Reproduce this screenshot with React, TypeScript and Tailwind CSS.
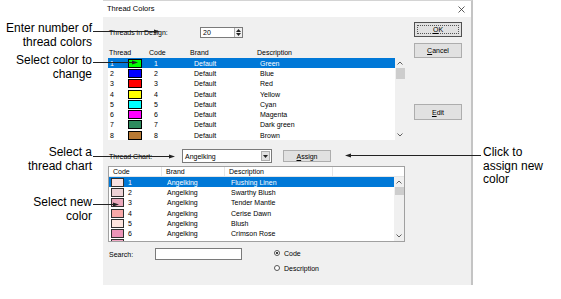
import React from "react";

const upperRows = [
  { n: "1", sw: "bg-[#00ff00]", desc: "Green" },
  { n: "2", sw: "bg-[#0000ff]", desc: "Blue" },
  { n: "3", sw: "bg-[#ff0000]", desc: "Red" },
  { n: "4", sw: "bg-[#ffff00]", desc: "Yellow" },
  { n: "5", sw: "bg-[#00ffff]", desc: "Cyan" },
  { n: "6", sw: "bg-[#ff00ff]", desc: "Magenta" },
  { n: "7", sw: "bg-[#2e8b5e]", desc: "Dark green" },
  { n: "8", sw: "bg-[#b87a34]", desc: "Brown" },
];

const lowerRows = [
  { n: "1", sw: "bg-[#f8e2e2]", desc: "Flushing Linen" },
  { n: "2", sw: "bg-[#ecd2d6]", desc: "Swarthy Blush" },
  { n: "3", sw: "bg-[#eaa8bc]", desc: "Tender Mantle" },
  { n: "4", sw: "bg-[#f8a8a8]", desc: "Cerise Dawn" },
  { n: "5", sw: "bg-[#fde4de]", desc: "Blush" },
  { n: "6", sw: "bg-[#ea94b8]", desc: "Crimson Rose" },
  { n: "7", sw: "bg-[#f0a8c4]", desc: "Sangria Belle" },
];

function Chevron({ up }: { up?: boolean }) {
  return (
    <svg width="6" height="4" viewBox="0 0 6 4">
      <polyline
        points={up ? "0.5,3.5 3,1 5.5,3.5" : "0.5,0.5 3,3 5.5,0.5"}
        fill="none"
        stroke="#606060"
        strokeWidth="1"
      />
    </svg>
  );
}

function ScrollBar({ thumb }: { thumb: string }) {
  return (
    <div className="w-[10px] h-full bg-[#f0f0f0] flex flex-col items-center">
      <div className="h-[10px] flex items-center justify-center">
        <Chevron up />
      </div>
      <div className={`w-[9px] bg-[#cdcdcd] ${thumb}`} />
      <div className="flex-1" />
      <div className="h-[10px] flex items-center justify-center">
        <Chevron />
      </div>
    </div>
  );
}

function Button({ children, h = "h-[15px]", def }: { children: React.ReactNode; h?: string; def?: boolean }) {
  return (
    <div
      className={`w-[48px] ${h} bg-[#e1e1e1] border ${def ? "border-[#505050]" : "border-[#adadad]"} flex items-center justify-center p-[2px]`}
    >
      <div className={`w-full h-full flex items-center justify-center ${def ? "border border-dotted border-[#555]" : ""}`}>
        {children}
      </div>
    </div>
  );
}

export default function App() {
  return (
    <div className="relative w-[561px] h-[299px] bg-white overflow-hidden font-['Liberation_Sans',Arial,sans-serif] text-black">
      {/* dialog */}
      <div className="ml-[103px] w-[370px] h-[285px] bg-[#f0f0f0] border-t border-[#d4d4d4] border-r-2 border-r-[#c4c4c4] flex flex-col text-[7px] leading-none">
        <div className="h-[16px] bg-white flex items-center justify-between pl-[4px] pr-[6px]">
          <span className="text-[7.5px]">Thread Colors</span>
          <svg width="7" height="7" viewBox="0 0 7 7">
            <line x1="0.5" y1="0.5" x2="6.5" y2="6.5" stroke="#333" strokeWidth="0.8" />
            <line x1="6.5" y1="0.5" x2="0.5" y2="6.5" stroke="#333" strokeWidth="0.8" />
          </svg>
        </div>

        <div className="flex flex-1 pl-[5px]">
          {/* left column */}
          <div className="w-[297px] flex flex-col">
            <div className="mt-[10px] h-[11px] flex items-center">
              <span className="w-[92px] pl-[1px]">Threads in Design:</span>
              <div className="w-[43px] h-[11px] bg-white border border-[#7a7a7a] flex items-center justify-between pl-[2px]">
                <span>20</span>
                <div className="w-[8px] h-full border-l border-[#adadad] flex flex-col items-center justify-center gap-[1px] bg-[#f0f0f0]">
                  <svg width="5" height="3" viewBox="0 0 5 3"><polygon points="0,3 2.5,0 5,3" fill="#222" /></svg>
                  <svg width="5" height="3" viewBox="0 0 5 3"><polygon points="0,0 2.5,3 5,0" fill="#222" /></svg>
                </div>
              </div>
            </div>

            <div className="mt-[8px] h-[12px] flex items-center pl-[1px]">
              <span className="w-[40px]">Thread</span>
              <span className="w-[41px]">Code</span>
              <span className="w-[67px]">Brand</span>
              <span>Description</span>
            </div>

            <div className="h-[82px] bg-white flex overflow-hidden">
              <div className="flex-1 flex flex-col">
                {upperRows.map((r, i) => (
                  <div
                    key={r.n}
                    className={`h-[10.3px] shrink-0 flex items-center ${i === 0 ? "bg-[#0078d7] text-white" : ""}`}
                  >
                    <span className="w-[20px] pl-[2px]">{r.n}</span>
                    <span className={`w-[14px] h-[9px] border border-black ${r.sw}`} />
                    <span className="w-[52px] pl-[12px]">{r.n}</span>
                    <span className="w-[66px]">Default</span>
                    <span>{r.desc}</span>
                  </div>
                ))}
              </div>
              <ScrollBar thumb="h-[11px]" />
            </div>

            <div className="mt-[9px] h-[14px] flex items-center">
              <span className="w-[74px] pl-[1px]">Thread Chart:</span>
              <div className="w-[90px] h-[14px] bg-white border border-[#7a7a7a] flex items-center justify-between pl-[2px] pr-[1px]">
                <span>Angelking</span>
                <div className="w-[9px] h-[10px] bg-[#e1e1e1] border border-[#adadad] flex items-center justify-center">
                  <svg width="5" height="3" viewBox="0 0 5 3"><polygon points="0,0 2.5,3 5,0" fill="#222" /></svg>
                </div>
              </div>
              <div className="ml-[11px]">
                <Button h="h-[12px]">
                  <span><span className="underline">A</span>ssign</span>
                </Button>
              </div>
            </div>

            <div className="mt-[3px] h-[76px] border border-[#a0a0a0] bg-white flex flex-col overflow-hidden">
              <div className="h-[10px] shrink-0 flex items-center border-b border-[#e5e5e5]">
                <span className="w-[53px] h-full flex items-center pl-[4px] border-r border-[#e5e5e5]">Code</span>
                <span className="w-[63px] h-full flex items-center pl-[4px] border-r border-[#e5e5e5]">Brand</span>
                <span className="w-[108px] h-full flex items-center pl-[4px] border-r border-[#e5e5e5]">Description</span>
              </div>
              <div className="flex-1 flex overflow-hidden">
                <div className="flex-1 flex flex-col">
                  {lowerRows.map((r, i) => (
                    <div
                      key={r.n}
                      className={`h-[10.3px] shrink-0 flex items-center ${i === 0 ? "bg-[#0078d7] text-white" : ""}`}
                    >
                      <span className="w-[2px]" />
                      <span className={`w-[13px] h-[9px] border border-[#303030] ${r.sw}`} />
                      <span className="w-[43px] pl-[4px]">{r.n}</span>
                      <span className="w-[64px]">Angelking</span>
                      <span>{r.desc}</span>
                    </div>
                  ))}
                </div>
                <ScrollBar thumb="h-[8px]" />
              </div>
            </div>

            <div className="mt-[6px] flex items-start">
              <span className="w-[47px] h-[12px] flex items-center pl-[1px]">Search:</span>
              <div className="w-[87px] h-[12px] bg-white border border-[#7a7a7a]" />
              <div className="ml-[32px] flex flex-col gap-[5px]">
                <div className="h-[10px] flex items-center gap-[4px]">
                  <span className="w-[6px] h-[6px] rounded-full border border-[#555] bg-white flex items-center justify-center">
                    <span className="w-[2px] h-[2px] rounded-full bg-black" />
                  </span>
                  <span>Code</span>
                </div>
                <div className="h-[10px] flex items-center gap-[4px]">
                  <span className="w-[6px] h-[6px] rounded-full border border-[#555] bg-white" />
                  <span>Description</span>
                </div>
              </div>
            </div>
          </div>

          {/* right column */}
          <div className="ml-[9px] flex flex-col">
            <div className="mt-[5px]">
              <Button def>
                <span><span className="underline">O</span>K</span>
              </Button>
            </div>
            <div className="mt-[6px]">
              <Button>
                <span><span className="underline">C</span>ancel</span>
              </Button>
            </div>
            <div className="mt-[46px]">
              <Button h="h-[16px]">
                <span><span className="underline">E</span>dit</span>
              </Button>
            </div>
          </div>
        </div>
      </div>

      {/* callout labels */}
      <div className="absolute left-0 top-[21px] w-[92px] text-right text-[12px] leading-[14px]">
        Enter number of
        <br />
        thread colors
      </div>
      <div className="absolute left-0 top-[53px] w-[92px] text-right text-[12px] leading-[14px]">
        Select color to
        <br />
        change
      </div>
      <div className="absolute left-0 top-[146px] w-[92px] text-right text-[12px] leading-[13.5px]">
        Select a
        <br />
        thread chart
      </div>
      <div className="absolute left-0 top-[195px] w-[92px] text-right text-[12px] leading-[14px]">
        Select new
        <br />
        color
      </div>
      <div className="absolute left-[483px] top-[146px] text-[12px] leading-[13.5px]">
        Click to
        <br />
        assign new
        <br />
        color
      </div>

      {/* callout leader lines */}
      <svg className="absolute inset-0 pointer-events-none" width="561" height="299" viewBox="0 0 561 299">
        <g stroke="#222" strokeWidth="1">
          <line x1="93" y1="31.5" x2="156" y2="31.5" />
          <line x1="93" y1="62.5" x2="134" y2="62.5" />
          <line x1="93" y1="156.5" x2="170" y2="156.5" />
          <line x1="350" y1="155.5" x2="481" y2="155.5" />
          <line x1="93" y1="204.5" x2="114" y2="204.5" />
        </g>
        <g fill="#222">
          <polygon points="160,31.5 154,29.5 154,33.5" />
          <polygon points="138,62.5 132,60.5 132,64.5" />
          <polygon points="175,156.5 169,154.5 169,158.5" />
          <polygon points="345,155.5 351,153.5 351,157.5" />
          <polygon points="119,204.5 113,202.5 113,206.5" />
        </g>
      </svg>
    </div>
  );
}
